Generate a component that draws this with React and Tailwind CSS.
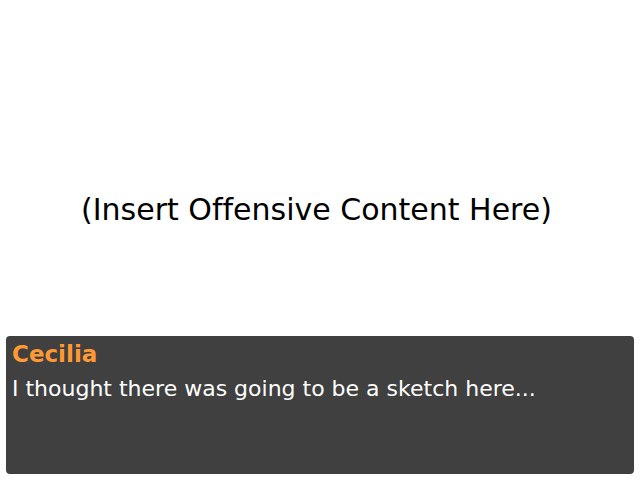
export default function App() {
  return (
    <div
      className="w-[640px] h-[480px] bg-white flex flex-col [font-variant-ligatures:none]"
      style={{ fontFamily: '"DejaVu Sans", sans-serif' }}
    >
      <div className="flex-1 flex justify-center pt-[195px] pr-[7px]">
        <p className="text-[30px] text-black leading-[30px]">(Insert Offensive Content Here)</p>
      </div>
      <div className="mx-[6px] mb-[6px] h-[138px] rounded-[4px] bg-[#404040] px-[6px] pt-[7px]">
        <div className="text-[23px] font-bold text-[#ff9933] leading-[23px]">Cecilia</div>
        <div className="text-[22px] text-white leading-[22px] mt-[12px]">
          I thought there was going to be a sketch here...
        </div>
      </div>
    </div>
  );
}
